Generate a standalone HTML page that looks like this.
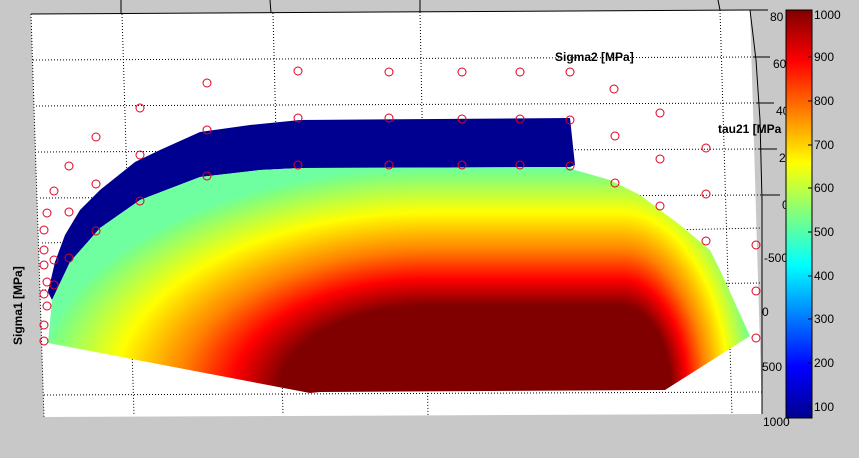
<!DOCTYPE html>
<html><head><style>
html,body{margin:0;padding:0;background:#c8c8c8;}
svg{display:block;}
text{font-family:"Liberation Sans",sans-serif;font-size:12px;fill:#000;}
</style></head><body>
<svg width="859" height="458" viewBox="0 0 859 458" xmlns="http://www.w3.org/2000/svg">
<defs>
<linearGradient id="jet" x1="0" y1="1" x2="0" y2="0">
<stop offset="0" stop-color="#00008f"/><stop offset="0.125" stop-color="#0000ff"/>
<stop offset="0.375" stop-color="#00ffff"/><stop offset="0.625" stop-color="#ffff00"/>
<stop offset="0.875" stop-color="#ff0000"/><stop offset="1" stop-color="#800000"/>
</linearGradient>
<linearGradient id="gm" gradientUnits="userSpaceOnUse" x1="0" y1="390" x2="0" y2="168">
<stop offset="0.38" stop-color="#800000"/><stop offset="0.5" stop-color="#ff0000"/>
<stop offset="0.63" stop-color="#ff8000"/><stop offset="0.8" stop-color="#ffff00"/>
<stop offset="0.97" stop-color="#80ff80"/><stop offset="1" stop-color="#70ffa0"/>
</linearGradient>
<radialGradient id="gl" gradientUnits="userSpaceOnUse" cx="0" cy="0" r="1" gradientTransform="translate(430 390) scale(395 222)">
<stop offset="0.38" stop-color="#800000"/><stop offset="0.5" stop-color="#ff0000"/>
<stop offset="0.63" stop-color="#ff8000"/><stop offset="0.8" stop-color="#ffff00"/>
<stop offset="0.97" stop-color="#80ff80"/><stop offset="1" stop-color="#70ffa0"/>
</radialGradient>
<radialGradient id="gr" gradientUnits="userSpaceOnUse" cx="0" cy="0" r="1" gradientTransform="translate(620 390) scale(135 222)">
<stop offset="0.38" stop-color="#800000"/><stop offset="0.5" stop-color="#ff0000"/>
<stop offset="0.63" stop-color="#ff8000"/><stop offset="0.8" stop-color="#ffff00"/>
<stop offset="0.97" stop-color="#80ff80"/><stop offset="1" stop-color="#70ffa0"/>
</radialGradient>
<clipPath id="surf"><path d="M48,343 L52,300 L70,262 L100,228 L140,200 L200,177 L260,170 L300,168 L570,167 L575,170 L610,180 L640,195 L680,225 L710,250 L720,270 L750,336 L665,390 L320,392 L310,393 Z"/></clipPath>
</defs>
<polygon points="31,14 750,10 762,414 44,417" fill="#fff"/>
<g stroke="#000" stroke-width="1">
<line x1="31" y1="14" x2="750" y2="10"/>
<line x1="121" y1="0" x2="121" y2="14"/><line x1="270" y1="0" x2="271" y2="13"/>
<line x1="420" y1="0" x2="420" y2="12"/><line x1="718" y1="0" x2="720" y2="10"/>
<path d="M750,10 L756,60 L760,120 L762,200 L762,414" fill="none"/>
<line x1="750" y1="10" x2="768" y2="10"/><line x1="753" y1="57" x2="770" y2="57"/>
<line x1="756" y1="103" x2="774" y2="103"/><line x1="758" y1="149" x2="777" y2="149"/>
<line x1="762" y1="195" x2="780" y2="195"/>
</g>
<g stroke="#000" stroke-width="1" stroke-dasharray="1,2" fill="none">
<line x1="33" y1="60" x2="752" y2="57"/><line x1="36" y1="106" x2="755" y2="103"/>
<line x1="38" y1="152" x2="758" y2="149"/><line x1="40" y1="198" x2="762" y2="195"/>
<line x1="42" y1="243" x2="762" y2="228"/><line x1="42" y1="290" x2="762" y2="283"/>
<line x1="44" y1="395" x2="762" y2="392"/>
<line x1="31" y1="14" x2="44" y2="417"/>
<line x1="122" y1="14" x2="134" y2="415"/><line x1="273" y1="13" x2="283" y2="415"/>
<line x1="420" y1="12" x2="428" y2="415"/><line x1="720" y1="10" x2="732" y2="414"/>
</g>
<path d="M48,292 L55,262 L65,235 L80,210 L100,190 L135,162 L160,150 L200,132 L250,125 L300,120 L570,118 L575,165 L570,167 L300,168 L260,170 L200,177 L140,200 L100,228 L70,262 L52,300 Z" fill="#000090"/>
<g clip-path="url(#surf)">
<rect x="0" y="100" width="430" height="320" fill="url(#gl)"/>
<rect x="430" y="100" width="190" height="320" fill="url(#gm)"/>
<rect x="620" y="100" width="150" height="320" fill="url(#gr)"/>
</g>
<g fill="none" stroke="#e00020" stroke-width="1">
<circle cx="298" cy="71" r="4"/><circle cx="389" cy="72" r="4"/><circle cx="462" cy="72" r="4"/><circle cx="520" cy="72" r="4"/><circle cx="570" cy="72" r="4"/>
<circle cx="207" cy="83" r="4"/><circle cx="140" cy="108" r="4"/><circle cx="96" cy="137" r="4"/><circle cx="69" cy="166" r="4"/><circle cx="54" cy="191" r="4"/><circle cx="47" cy="213" r="4"/><circle cx="69" cy="212" r="4"/><circle cx="44" cy="230" r="4"/>
<circle cx="298" cy="118" r="4"/><circle cx="389" cy="118" r="4"/><circle cx="462" cy="119" r="4"/><circle cx="520" cy="119" r="4"/><circle cx="570" cy="120" r="4"/>
<circle cx="207" cy="130" r="4"/><circle cx="140" cy="155" r="4"/><circle cx="96" cy="184" r="4"/><circle cx="69" cy="258" r="4"/><circle cx="96" cy="231" r="4"/><circle cx="140" cy="201" r="4"/><circle cx="207" cy="176" r="4"/>
<circle cx="298" cy="165" r="4"/><circle cx="389" cy="165" r="4"/><circle cx="462" cy="165" r="4"/><circle cx="520" cy="165" r="4"/><circle cx="570" cy="166" r="4"/>
<circle cx="614" cy="89" r="4"/><circle cx="615" cy="136" r="4"/><circle cx="615" cy="183" r="4"/>
<circle cx="660" cy="113" r="4"/><circle cx="660" cy="159" r="4"/><circle cx="660" cy="206" r="4"/>
<circle cx="706" cy="148" r="4"/><circle cx="706" cy="194" r="4"/><circle cx="706" cy="241" r="4"/>
<circle cx="756" cy="245" r="4"/><circle cx="756" cy="291" r="4"/><circle cx="756" cy="338" r="4"/>
<circle cx="44" cy="250" r="4"/><circle cx="54" cy="260" r="4"/><circle cx="44" cy="265" r="4"/><circle cx="47" cy="282" r="4"/><circle cx="54" cy="285" r="4"/><circle cx="44" cy="294" r="4"/><circle cx="47" cy="306" r="4"/><circle cx="44" cy="325" r="4"/><circle cx="44" cy="341" r="4"/>
</g>
<text x="555" y="61" style="font-weight:bold;font-size:12px">Sigma2 [MPa]</text>
<text x="718" y="133" style="font-weight:bold;font-size:12px">tau21 [MPa</text>
<text transform="translate(22,345) rotate(-90)" style="font-weight:bold;font-size:12px">Sigma1 [MPa]</text>
<g>
<text x="770" y="21">80</text><text x="773" y="68">60</text><text x="776" y="115">40</text><text x="779" y="162">20</text><text x="782" y="209">0</text>
<text x="764" y="262">-500</text><text x="762" y="316">0</text><text x="762" y="371">500</text><text x="763" y="426">1000</text>
</g>
<rect x="786" y="10" width="26" height="408" fill="url(#jet)" stroke="#000" stroke-width="1"/>
<g stroke="#000">
<line x1="812" y1="57" x2="808" y2="57"/><line x1="812" y1="101" x2="808" y2="101"/><line x1="812" y1="145" x2="808" y2="145"/><line x1="812" y1="188" x2="808" y2="188"/><line x1="812" y1="232" x2="808" y2="232"/><line x1="812" y1="276" x2="808" y2="276"/><line x1="812" y1="319" x2="808" y2="319"/><line x1="812" y1="363" x2="808" y2="363"/><line x1="812" y1="407" x2="808" y2="407"/>
</g>
<g>
<text x="814" y="19">1000</text><text x="814" y="61">900</text><text x="814" y="105">800</text><text x="814" y="149">700</text><text x="814" y="192">600</text><text x="814" y="236">500</text><text x="814" y="280">400</text><text x="814" y="323">300</text><text x="814" y="367">200</text><text x="814" y="411">100</text>
</g>
</svg>
</body></html>
